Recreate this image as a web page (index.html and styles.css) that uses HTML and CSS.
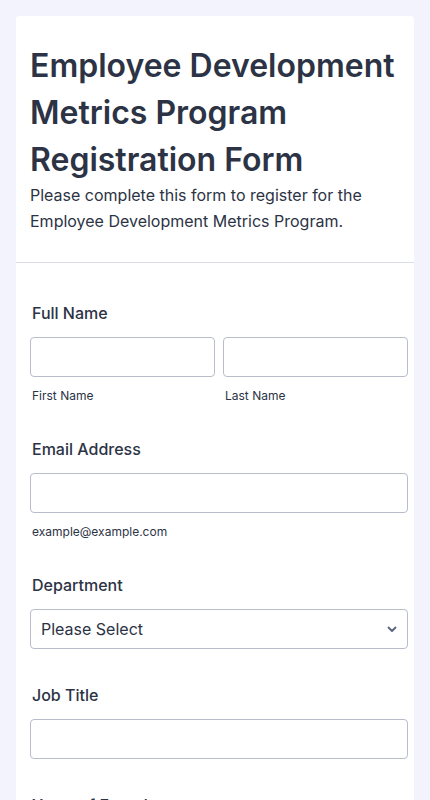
FILE: index.html
```html
<!DOCTYPE html>
<html lang="en">
<head>
    <meta charset="UTF-8">
    <meta name="viewport" content="width=device-width, initial-scale=1.0">
    <title>Employee Development Metrics Program Registration Form</title>
    <link rel="stylesheet" href="styles.css">
</head>
<body>
    <div class="form-card">
        <div class="form-header">
            <h1>Employee Development Metrics Program Registration Form</h1>
            <p class="subheader">Please complete this form to register for the Employee Development Metrics Program.</p>
        </div>

        <div class="form-body">
            <div class="field">
                <label class="field-label">Full Name</label>
                <div class="name-row">
                    <div class="name-col">
                        <input type="text" id="firstName">
                        <span class="sublabel">First Name</span>
                    </div>
                    <div class="name-col">
                        <input type="text" id="lastName">
                        <span class="sublabel">Last Name</span>
                    </div>
                </div>
            </div>

            <div class="field">
                <label class="field-label" for="email">Email Address</label>
                <input type="email" id="email">
                <span class="sublabel">example@example.com</span>
            </div>

            <div class="field">
                <label class="field-label" for="department">Department</label>
                <div class="select-wrap">
                    <select id="department">
                        <option>Please Select</option>
                    </select>
                    <svg class="chevron" width="10" height="7" viewBox="0 0 10 7">
                        <path d="M1.5 1.5 L5 5 L8.5 1.5" fill="none" stroke="#57647e" stroke-width="1.8" stroke-linecap="round" stroke-linejoin="round"/>
                    </svg>
                </div>
            </div>

            <div class="field">
                <label class="field-label" for="jobTitle">Job Title</label>
                <input type="text" id="jobTitle">
            </div>

            <div class="field">
                <label class="field-label" for="years">Years of Experience</label>
                <input type="text" id="years">
            </div>
        </div>
    </div>
</body>
</html>
```

FILE: styles.css
```css
* {
    margin: 0;
    padding: 0;
    box-sizing: border-box;
}

body {
    font-family: 'Inter', 'Noto Sans', sans-serif;
    background-color: #f3f3fe;
    color: #2c3345;
    padding: 16px 16px 40px;
}

.form-card {
    background: #fff;
    border-radius: 3px;
}

.form-header {
    padding: 26px 6px 28px 14px;
    border-bottom: 1px solid #dadde6;
}

h1 {
    font-size: 32px;
    font-weight: 600;
    line-height: 47px;
}

.subheader {
    font-size: 16px;
    line-height: 26px;
    margin-top: -1px;
}

.form-body {
    padding: 38px 6px 0 14px;
}

.field {
    margin-bottom: 34px;
}

.field-label {
    display: block;
    font-size: 16px;
    font-weight: 500;
    line-height: 24px;
    padding-left: 2px;
    margin-bottom: 12px;
}

.name-row {
    display: flex;
    gap: 8px;
}

.name-col {
    flex: 1;
}

input,
select {
    display: block;
    width: 100%;
    height: 40px;
    border: 1px solid #b8bdc9;
    border-radius: 4px;
    background: #fff;
    font-family: inherit;
    font-size: 16px;
    color: #2c3345;
    outline: none;
}

.sublabel {
    display: block;
    font-size: 12px;
    line-height: 18px;
    padding-left: 2px;
    margin-top: 10px;
    margin-bottom: -2px;
    color: #2c3345;
}

.select-wrap {
    position: relative;
}

select {
    appearance: none;
    -webkit-appearance: none;
    padding: 0 30px 0 10px;
}

.chevron {
    position: absolute;
    right: 11px;
    top: 17px;
    pointer-events: none;
}
```
